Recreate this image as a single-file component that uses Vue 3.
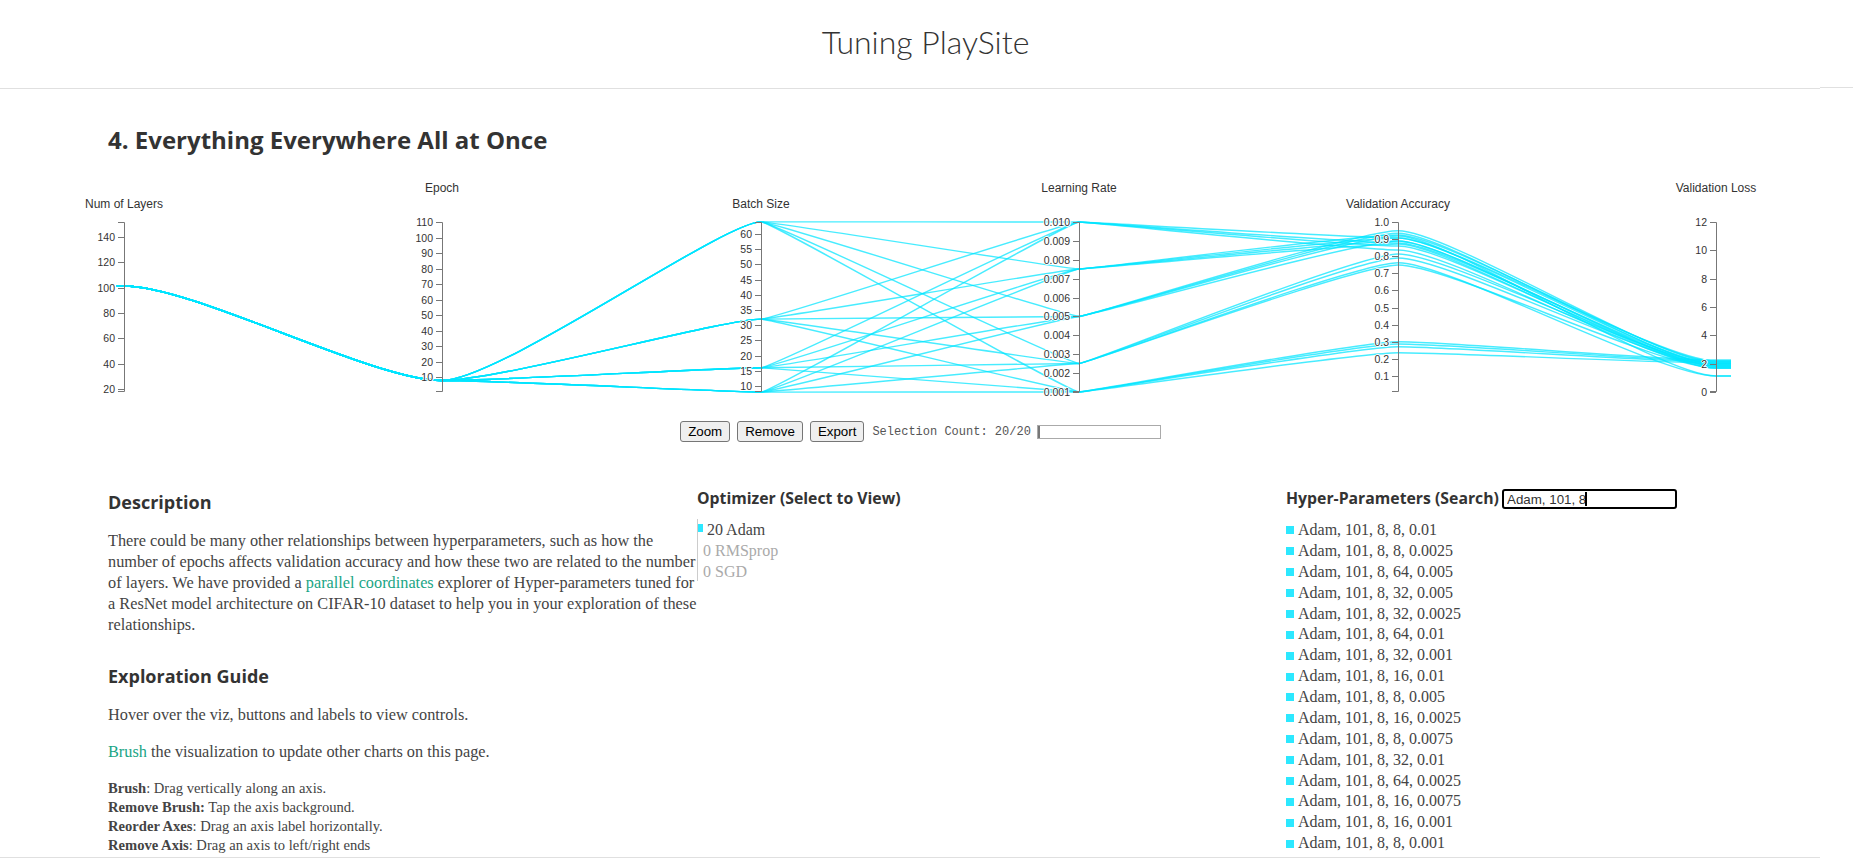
<template>
  <div class="page">
    <header class="top">
      <h1 class="site-title">Tuning PlaySite</h1>
      <span class="top-notch"></span>
    </header>

    <main class="content">
      <h2 class="section-title">4. Everything Everywhere All at Once</h2>

      <svg class="chart" width="1853" height="240" viewBox="0 170 1853 240">
        <path v-for="(d, i) in linePaths" :key="i" :d="d" class="line" />
        <g v-for="axis in axes" :key="axis.label">
          <text class="axis-label" :x="axis.x" :y="axis.labelY">{{ axis.label }}</text>
          <path class="axis-line" :d="`M${axis.x - 6} 222.5H${axis.x}.5V391.5H${axis.x - 6}`" />
          <g v-for="tick in axis.ticks" :key="tick.text">
            <line class="axis-line" :x1="axis.x - 6" :x2="axis.x" :y1="tick.y" :y2="tick.y" />
            <text class="tick" :x="axis.x - 9" :y="tick.y + 3.5">{{ tick.text }}</text>
          </g>
        </g>
      </svg>

      <div class="controls">
        <button>Zoom</button>
        <button>Remove</button>
        <button>Export</button>
        <span class="count">Selection Count: 20/20</span>
        <div class="count-bar"><div class="count-fill"></div></div>
      </div>

      <div class="columns">
        <section class="intro">
          <h3 class="intro-head">Description</h3>
          <p class="text">
            There could be many other relationships between hyperparameters, such as how the<br />
            number of epochs affects validation accuracy and how these two are related to the number<br />
            of layers. We have provided a <a class="link">parallel coordinates</a> explorer of Hyper-parameters tuned for<br />
            a ResNet model architecture on CIFAR-10 dataset to help you in your exploration of these<br />
            relationships.
          </p>
          <h3 class="intro-head guide">Exploration Guide</h3>
          <p class="text">Hover over the viz, buttons and labels to view controls.</p>
          <p class="text"><a class="link">Brush</a> the visualization to update other charts on this page.</p>
          <p class="small">
            <b>Brush</b>: Drag vertically along an axis.<br />
            <b>Remove Brush:</b> Tap the axis background.<br />
            <b>Reorder Axes</b>: Drag an axis label horizontally.<br />
            <b>Remove Axis</b>: Drag an axis to left/right ends
          </p>
        </section>

        <section>
          <h3 class="col-head opt-head">Optimizer (Select to View)</h3>
          <ul class="optimizers">
            <li class="active"><span class="opt-bar"></span>20 Adam</li>
            <li>0 RMSprop</li>
            <li>0 SGD</li>
          </ul>
        </section>

        <section>
          <div class="search-row">
            <h3 class="col-head">Hyper-Parameters (Search)</h3>
            <div class="search">
              <input type="text" value="Adam, 101, 8" readonly />
              <span class="caret"></span>
            </div>
          </div>
          <ul class="params">
            <li v-for="p in paramList" :key="p"><span class="swatch"></span>{{ p }}</li>
          </ul>
        </section>
      </div>
    </main>

    <footer class="bottom"></footer>
  </div>
</template>

<script setup>
const axisX = [124, 442, 761, 1079, 1398, 1716]

const makeTicks = (values, yOf, fmt = String) =>
  values.map((v) => ({ text: fmt(v), y: Math.round(yOf(v)) + 0.5 }))

const range = (from, to, step) => {
  const out = []
  for (let v = from; v <= to + 1e-9; v += step) out.push(v)
  return out
}

const layersY = (v) => 389 - (v - 20) * 1.267
const epochY = (v) => 377 - (v - 10) * 1.55
const batchY = (v) => 386 - (v - 10) * 3.04
const lrY = (v) => 392 - (v - 0.001) * 18889
const accY = (v) => 393 - v * 171
const lossY = (v) => 392 - v * 14.17

const axes = [
  { label: 'Num of Layers', x: axisX[0], labelY: 208, ticks: makeTicks(range(20, 140, 20), layersY) },
  { label: 'Epoch', x: axisX[1], labelY: 192, ticks: makeTicks(range(10, 110, 10), epochY) },
  { label: 'Batch Size', x: axisX[2], labelY: 208, ticks: makeTicks(range(10, 60, 5), batchY) },
  { label: 'Learning Rate', x: axisX[3], labelY: 192, ticks: makeTicks(range(0.001, 0.01, 0.001), lrY, (v) => v.toFixed(3)) },
  { label: 'Validation Accuracy', x: axisX[4], labelY: 208, ticks: makeTicks(range(0.1, 1, 0.1), accY, (v) => v.toFixed(1)) },
  { label: 'Validation Loss', x: axisX[5], labelY: 192, ticks: makeTicks(range(0, 12, 2), lossY) }
]

// visible order first, the last four rows are below the fold in the real page
const params = [
  [8, 0.01], [8, 0.0025], [64, 0.005], [32, 0.005], [32, 0.0025], [64, 0.01], [32, 0.001], [16, 0.01],
  [8, 0.005], [16, 0.0025], [8, 0.0075], [32, 0.01], [64, 0.0025], [16, 0.0075], [16, 0.001], [8, 0.001],
  [64, 0.0075], [64, 0.001], [32, 0.0075], [16, 0.005]
]

const paramList = params.slice(0, 16).map(([b, lr]) => `Adam, 101, 8, ${b}, ${lr}`)

// accuracy and loss end points per learning rate, read off the chart (pixels)
const accEnds = {
  0.01: [238, 243, 246, 250],
  0.0075: [235, 238, 241, 244],
  0.005: [230.7, 233.3, 236, 241],
  0.0025: [254, 258, 262.7, 265],
  0.001: [341.7, 344, 346.7, 352.7]
}
const lossEnds = {
  0.01: [361, 364, 366, 368],
  0.0075: [362, 364, 366, 368],
  0.005: [363, 365, 376, 367],
  0.0025: [364, 366, 376, 368],
  0.001: [360, 361, 362, 363]
}

const seen = {}
const lrPx = (lr) => (lr === 0.0075 ? 269 : lr === 0.0025 ? 363.5 : lrY(lr))
// control point reach on each side of every gap between two axes
const reach = [[0.22, 0.22], [0.18, 0.12], [0.04, 0.04], [0.03, 0.13], [0.16, 0.18]]

const linePaths = params.map(([b, lr]) => {
  const n = seen[lr] || 0
  seen[lr] = n + 1
  const ys = [286, 380.5, batchY(b), lrPx(lr), accEnds[lr][n], lossEnds[lr][n]]
  let d = `M116 ${ys[0]}H${axisX[0]}`
  for (let i = 0; i < 5; i++) {
    const gap = axisX[i + 1] - axisX[i]
    d += `C${axisX[i] + gap * reach[i][0]} ${ys[i]} ${axisX[i + 1] - gap * reach[i][1]} ${ys[i + 1]} ${axisX[i + 1]} ${ys[i + 1]}`
  }
  return d + 'H1731'
})
</script>

<style>
html, body { margin: 0; background: #fff; overflow: hidden; }
</style>

<style scoped>
.page { width: 1853px; height: 868px; overflow: hidden; display: flex; flex-direction: column; background: #fff; color: #333; }

.top { flex: none; position: relative; height: 89px; width: 1820px; box-sizing: border-box; border-bottom: 1px solid #e0e0e0; padding-top: 20px; }
.top-notch { position: absolute; left: 1820px; top: 87px; width: 33px; height: 1px; background: #e0e0e0; }
.site-title { margin: 0; width: 1851px; text-align: center; font: 300 32px/44px Lato, sans-serif; color: #333; }

.content { flex: 1; min-height: 0; overflow: hidden; }
.section-title { margin: 34px 0 0 108px; font: 700 24px/34px "Open Sans", sans-serif; color: #333; }

.chart { display: block; margin-top: 13px; }
.line { fill: none; stroke: #00e5ff; stroke-opacity: 0.72; stroke-width: 1.4; }
.axis-line { fill: none; stroke: #777; stroke-width: 1; }
.axis-label { font: 12px "Liberation Sans", Arial, sans-serif; fill: #333; text-anchor: middle; }
.tick { font: 10.5px "Liberation Sans", Arial, sans-serif; fill: #333; text-anchor: end; text-shadow: 0 1px 0 #fff, 1px 0 0 #fff, 0 -1px 0 #fff, -1px 0 0 #fff; }

.controls { display: flex; align-items: center; justify-content: center; gap: 7px; padding-right: 12px; margin-top: 11px; height: 21px; }
.controls button { height: 21px; padding: 0 7px; font: 13.33px "Liberation Sans", Arial, sans-serif; color: #000; background: #efefef; border: 1px solid #767676; border-radius: 3px; }
.count { font: 12px "Liberation Mono", "Courier New", monospace; color: #555; margin-left: 1px; margin-right: -1px; }
.count-bar { width: 122px; height: 12px; border: 1px solid #aaa; background: #fff; }
.count-fill { width: 2px; height: 100%; background: #777; }

.columns { display: grid; grid-template-columns: 589px 589px 1fr; margin: 41px 0 0 108px; }

.intro-head { margin: 7px 0 0; font: 700 18px/24px "Open Sans", sans-serif; color: #333; }
.guide { margin-top: 29px; }
.text { margin: 16px 0 0; font: 16.3px/21px "Liberation Serif", serif; color: #444; white-space: nowrap; }
.link { color: #1aa585; }
.small { margin: 17px 0 0; font: 14.6px/19px "Liberation Serif", serif; color: #444; white-space: nowrap; }
.small b { font-weight: 700; }

.col-head { margin: 0; font: 700 15.8px/22px "Open Sans", sans-serif; color: #333; flex: 0 0 216px; white-space: nowrap; }
.opt-head { margin-top: 4px; }
.optimizers { list-style: none; margin: 10px 0 0; padding: 0 0 0 5px; border-left: 1px solid #ccc; height: 62px; font: 16px/21px "Liberation Serif", serif; color: #aaa; position: relative; }
.optimizers .active { color: #444; padding-left: 4px; }
.opt-bar { position: absolute; left: 0; top: 5px; width: 5px; height: 8px; background: #2ce8ff; }

.search-row { display: flex; align-items: center; margin-top: 4px; }
.search { position: relative; margin-top: 2px; }
.search input { display: block; width: 175px; height: 20px; box-sizing: border-box; padding: 0 3px; font: 13.33px "Liberation Sans", Arial, sans-serif; color: #333; border: 2px solid #000; border-radius: 3px; outline: none; }
.caret { position: absolute; left: 83px; top: 3px; width: 2px; height: 14px; background: #000; }

.params { list-style: none; margin: 11px 0 0; padding: 0; font: 16px/20.87px "Liberation Serif", serif; color: #444; }
.params li { display: flex; align-items: center; }
.swatch { width: 8px; height: 8px; margin-right: 4px; background: #2ce8ff; }

.bottom { flex: none; height: 11px; width: 1820px; border-top: 1px solid #e0e0e0; box-sizing: border-box; background: #fff; }
</style>
